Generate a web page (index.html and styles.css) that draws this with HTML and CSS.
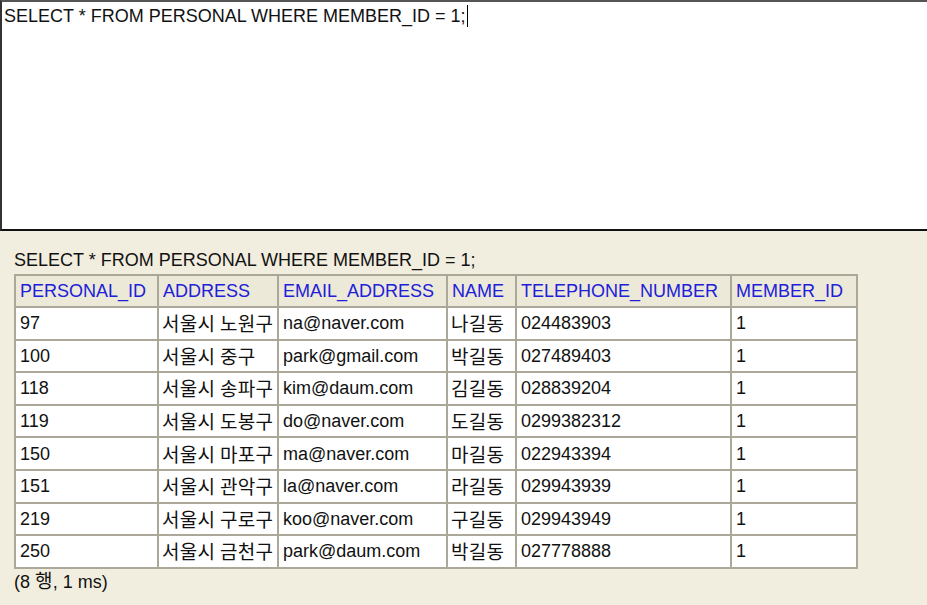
FILE: index.html
```html
<!DOCTYPE html>
<html>
<head>
<meta charset="utf-8">
<link rel="stylesheet" href="styles.css">
</head>
<body>
<div class="editor">SELECT * FROM PERSONAL WHERE MEMBER_ID = 1;<span class="caret"></span></div>
<div class="result">
  <div class="query">SELECT * FROM PERSONAL WHERE MEMBER_ID = 1;</div>
  <table class="grid">
    <colgroup>
      <col class="c1"><col class="c2"><col class="c3"><col class="c4"><col class="c5"><col class="c6">
    </colgroup>
    <thead>
      <tr><th>PERSONAL_ID</th><th>ADDRESS</th><th>EMAIL_ADDRESS</th><th>NAME</th><th>TELEPHONE_NUMBER</th><th>MEMBER_ID</th></tr>
    </thead>
    <tbody>
      <tr><td>97</td><td class="ko">서울시 노원구</td><td>na@naver.com</td><td class="ko">나길동</td><td>024483903</td><td>1</td></tr>
      <tr><td>100</td><td class="ko">서울시 중구</td><td>park@gmail.com</td><td class="ko">박길동</td><td>027489403</td><td>1</td></tr>
      <tr><td>118</td><td class="ko">서울시 송파구</td><td>kim@daum.com</td><td class="ko">김길동</td><td>028839204</td><td>1</td></tr>
      <tr><td>119</td><td class="ko">서울시 도봉구</td><td>do@naver.com</td><td class="ko">도길동</td><td>0299382312</td><td>1</td></tr>
      <tr><td>150</td><td class="ko">서울시 마포구</td><td>ma@naver.com</td><td class="ko">마길동</td><td>022943394</td><td>1</td></tr>
      <tr><td>151</td><td class="ko">서울시 관악구</td><td>la@naver.com</td><td class="ko">라길동</td><td>029943939</td><td>1</td></tr>
      <tr><td>219</td><td class="ko">서울시 구로구</td><td>koo@naver.com</td><td class="ko">구길동</td><td>029943949</td><td>1</td></tr>
      <tr><td>250</td><td class="ko">서울시 금천구</td><td>park@daum.com</td><td class="ko">박길동</td><td>027778888</td><td>1</td></tr>
    </tbody>
  </table>
  <div class="footer">(8 <span class="ko">행</span>, 1 ms)</div>
</div>
</body>
</html>
```
FILE: styles.css
```css
html, body {
  margin: 0;
  padding: 0;
  background: #f1eedf;
  font-family: "Liberation Sans", Arial, "Noto Sans CJK KR", sans-serif;
  font-size: 18px;
  color: #111;
}
.editor {
  background: #fff;
  height: 231px;
  border: 2px solid #111;
  border-right: none;
  border-top-color: #555;
  border-left-color: #333;
  padding: 3px 2px;
  box-sizing: border-box;
  line-height: 22px;
  white-space: pre;
}
.caret {
  display: inline-block;
  width: 1px;
  height: 22px;
  background: #000;
  vertical-align: top;
  margin-left: 1px;
}
.result {
  padding: 18px 14px 0 14px;
}
.query {
  line-height: 22px;
  margin-bottom: 3px;
}
.grid {
  border-collapse: collapse;
  border: 2px solid #aca899;
  table-layout: fixed;
  width: 842px;
}
.c1 { width: 143px; }
.c2 { width: 120px; }
.c3 { width: 169px; }
.c4 { width: 69px; }
.c5 { width: 215px; }
.c6 { width: 126px; }
.grid th, .grid td {
  border: 2px solid #aca899;
  padding: 4px 3px 4px 4px;
  line-height: 22px;
  text-align: left;
  white-space: nowrap;
  font-weight: normal;
}
.grid tbody tr {
  height: 32.6px;
}
.grid thead tr {
  height: 32px;
}
.grid th {
  background: #ece9d8;
  color: #2020d8;
}
.grid td {
  background: #fff;
}
.ko {
  font-family: "Noto Sans CJK KR", "Liberation Sans", sans-serif;
  font-size: 19px;
  letter-spacing: 0.3px;
  line-height: 20px;
}
.grid td.ko {
  padding-left: 3px;
  line-height: 22px;
}
.footer {
  line-height: 22px;
  margin-top: 1px;
}
```
